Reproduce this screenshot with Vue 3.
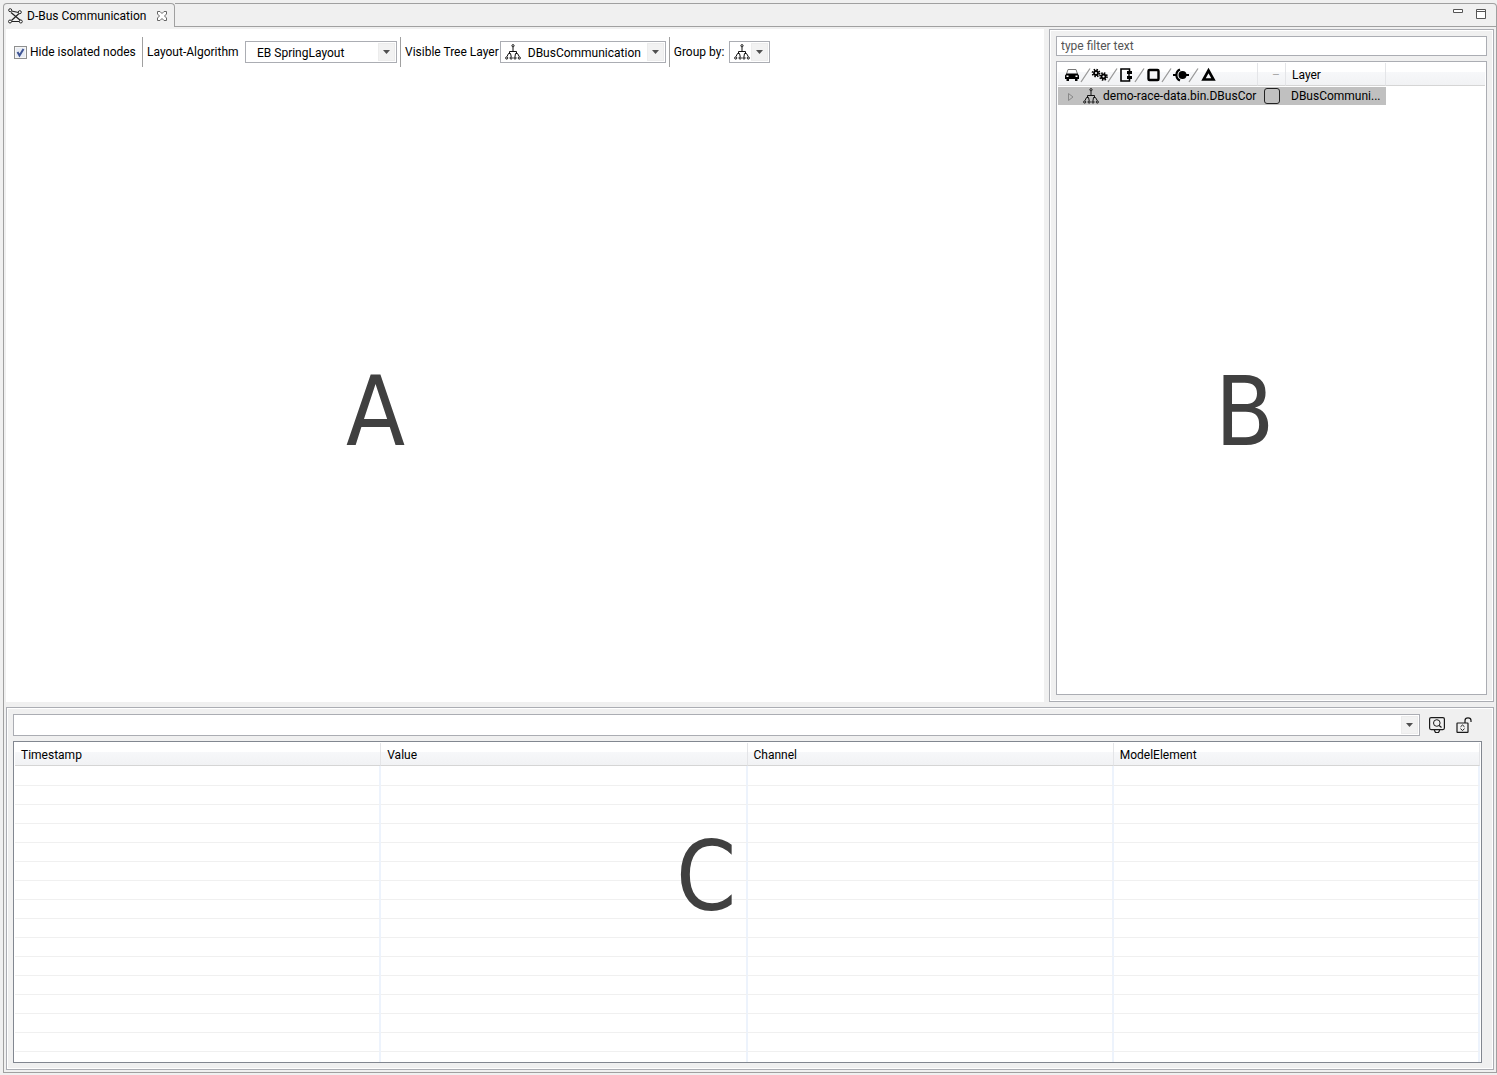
<script setup>
import { ref } from 'vue'

const hideIsolated = ref(true)
const filter = ref('')
const query = ref('')
const layoutAlgorithm = ref('EB SpringLayout')
const treeLayer = ref('DBusCommunication')
const group = ref('layer')
const columns = ['Timestamp', 'Value', 'Channel', 'ModelElement']
const rowCount = 16
</script>

<template>
  <svg class="defs" width="0" height="0" aria-hidden="true">
    <symbol id="tree-icon" viewBox="0 0 16 16">
      <g fill="none" stroke="#111">
        <circle cx="8" cy="1.700" r="1.100" />
        <path d="M8 3V7.500M4.500 10V7.500H11.500V10M4.500 9.500H3.500L2 12.500M4.500 9.500H5.500L6.200 12.500M11.500 9.500H10.500L10 12.500M11.500 9.500H12.500L14.200 12.500" />
        <circle cx="1.700" cy="14" r="1.100" />
        <circle cx="6.100" cy="14" r="1.100" />
        <circle cx="10" cy="14" r="1.100" />
        <circle cx="14.300" cy="14" r="1.100" />
      </g>
    </symbol>
    <symbol id="arrow-icon" viewBox="0 0 7 4">
      <path d="M0 0H7L3.500 4Z" fill="#505050" />
    </symbol>
  </svg>

  <div class="window">
    <header class="tabbar">
      <div class="tab">
        <svg class="tab-icon" width="16" height="16" viewBox="0 0 16 16" fill="none" stroke="#222" aria-hidden="true">
          <path d="M3.500 3L10.500 4.500M11 5.500L3.500 12.500M3 4.500L12.500 12.500M3.500 13.500H12" stroke-width="1.200" />
          <circle cx="2.200" cy="2.200" r="1.500" fill="#fff" />
          <circle cx="11.800" cy="4.200" r="1.500" fill="#fff" />
          <circle cx="2" cy="13.500" r="1.500" fill="#fff" />
          <circle cx="12.800" cy="13.500" r="1.500" fill="#fff" />
        </svg>
        <span>D-Bus Communication</span>
        <button class="plain" aria-label="Close">
          <svg width="12" height="12" viewBox="0 0 12 12" aria-hidden="true">
            <path d="M1.500 1.500H4L6 3.500L8 1.500H10.500V4L8.500 6L10.500 8V10.500H8L6 8.500L4 10.500H1.500V8L3.500 6L1.500 4Z" fill="#fff" stroke="#666" />
          </svg>
        </button>
      </div>
      <div class="tab-rest">
        <button class="plain" aria-label="Minimize">
          <svg width="10" height="10" viewBox="0 0 10 10" aria-hidden="true"><path d="M.5 .5H9.500V3.500H.5Z" fill="#fff" stroke="#555" /></svg>
        </button>
        <button class="plain" aria-label="Maximize">
          <svg width="10" height="10" viewBox="0 0 10 10" aria-hidden="true"><path d="M.5 .5H9.500V9.500H.5ZM0 2.500H10" fill="#fff" stroke="#555" /></svg>
        </button>
      </div>
    </header>

    <main class="content">
      <div class="upper">
        <section class="graph">
          <div class="toolbar">
            <label class="check">
              <span class="box">
                <input v-model="hideIsolated" type="checkbox" />
                <svg v-if="hideIsolated" width="13" height="13" viewBox="0 0 13 13" aria-hidden="true">
                  <path d="M3.500 6L5.500 9.500L9.500 3" fill="none" stroke="#3f5595" stroke-width="2" />
                </svg>
              </span>
              <span>Hide isolated nodes</span>
            </label>
            <div class="group first">
              <label class="algorithm-label" for="algorithm">Layout-Algorithm</label>
              <div class="combo algorithm">
                <select id="algorithm" v-model="layoutAlgorithm"><option>EB SpringLayout</option></select>
                <span class="arrow"><svg width="7" height="4"><use href="#arrow-icon" /></svg></span>
              </div>
            </div>
            <div class="group">
              <label for="layer">Visible Tree Layer</label>
              <div class="combo layer">
                <svg class="lead" width="16" height="16"><use href="#tree-icon" /></svg>
                <select id="layer" v-model="treeLayer"><option>DBusCommunication</option></select>
                <span class="arrow"><svg width="7" height="4"><use href="#arrow-icon" /></svg></span>
              </div>
            </div>
            <div class="group">
              <label class="group-label" for="group-by">Group by:</label>
              <div class="combo group-by">
                <svg class="lead" width="16" height="16"><use href="#tree-icon" /></svg>
                <select id="group-by" v-model="group"><option value="layer"></option></select>
                <span class="arrow"><svg width="7" height="4"><use href="#arrow-icon" /></svg></span>
              </div>
            </div>
          </div>
          <div class="mark mark-a">A</div>
        </section>

        <section class="panel side">
          <input v-model="filter" class="filter" type="text" placeholder="type filter text" aria-label="Filter" />
          <div class="tree">
            <table>
              <colgroup><col class="c-name" /><col class="c-check" /><col class="c-layer" /><col /></colgroup>
              <thead>
                <tr>
                  <th aria-label="Element">
                    <svg class="kinds" width="160" height="16" viewBox="0 0 160 16" aria-hidden="true">
                      <path d="M3.500 7L5 2.500H13L14.500 7" fill="none" stroke="#777" />
                      <path d="M3.500 6.500H14.500L16 8.500V12H14.500V14H12V12H6V14H3.500V12H2V8.500Z" fill="#000" />
                      <path d="M3.500 8.500H5.500V10H3.500ZM12.500 8.500H14.500V10H12.500Z" fill="#fff" />
                      <path d="M18 15L27 1.500M45 15L54 1.500M72 15L81 1.500M99 15L108 1.500M126 15L135 1.500" fill="none" stroke="#999" stroke-width="1.300" />
                      <g fill="none" stroke="#000">
                        <circle cx="33" cy="6" r="2" stroke-width="1.800" />
                        <circle cx="33" cy="6" r="3.500" stroke-width="1.700" stroke-dasharray="1.500 1.249" />
                        <circle cx="40.500" cy="9.500" r="2" stroke-width="1.800" />
                        <circle cx="40.500" cy="9.500" r="3.500" stroke-width="1.700" stroke-dasharray="1.500 1.249" />
                        <path d="M66.500 4V2H58V14H66.500V12" stroke-width="1.600" />
                        <path d="M66 5V11" stroke-width="1.400" />
                        <path d="M64 5.500H69M64 10.500H69" stroke-width="3" />
                        <rect x="85.500" y="3" width="10" height="10" rx="1" stroke-width="2.400" />
                        <path d="M117 2.500A6 6 0 0 0 117 13.500" stroke-width="2.200" />
                        <path d="M110 8H113M122 8H126" stroke-width="2.200" />
                        <path d="M145.500 3.500L150.500 12.500H140.500Z" stroke-width="2.600" />
                      </g>
                      <circle cx="119.500" cy="8" r="4" />
                    </svg>
                  </th>
                  <th class="dash"><span>–</span></th>
                  <th>Layer</th>
                  <th aria-hidden="true"></th>
                </tr>
              </thead>
              <tbody>
                <tr>
                  <td>
                    <div class="node">
                      <svg class="expander" width="6" height="8" viewBox="0 0 6 8" aria-hidden="true"><path d="M.5 .5L5 4L.5 7.500Z" fill="none" stroke="#888" /></svg>
                      <svg class="node-icon" width="16" height="16" aria-hidden="true"><use href="#tree-icon" /></svg>
                      <span>demo-race-data.bin.DBusCor</span>
                    </div>
                  </td>
                  <td><input class="swatch" type="checkbox" aria-label="Show element" /></td>
                  <td>DBusCommuni...</td>
                  <td class="blank"></td>
                </tr>
              </tbody>
            </table>
          </div>
          <div class="mark mark-b">B</div>
        </section>
      </div>

      <section class="panel lower">
        <div class="search">
          <div class="combo query">
            <select v-model="query" aria-label="Query"><option value=""></option></select>
            <span class="arrow"><svg width="7" height="4"><use href="#arrow-icon" /></svg></span>
          </div>
          <button class="plain" aria-label="Search">
            <svg width="16" height="16" viewBox="0 0 16 16" fill="none" stroke="#1a1a1a" aria-hidden="true">
              <rect x=".6" y=".6" width="14.800" height="12" rx="1.500" stroke-width="1.200" />
              <circle cx="7.800" cy="6" r="3.300" />
              <path d="M10.200 8.500L12.500 10.500M5.500 13V13.500L6.500 15.500H9.500L10.500 13.500V13" stroke-width="1.200" />
            </svg>
          </button>
          <button class="plain" aria-label="Unlock scrolling">
            <svg width="16" height="16" viewBox="0 0 16 16" fill="none" stroke="#1a1a1a" aria-hidden="true">
              <rect x="1" y="6" width="11" height="9.400" rx=".5" stroke-width="1.200" />
              <path d="M9 6V3.500Q9 .8 12 .8Q15 .8 15 3.500V5" stroke-width="1.200" />
              <path d="M4.500 9.800L6.500 8L8.500 9.800M4.500 11.700L6.500 13.500L8.500 11.700" />
            </svg>
          </button>
        </div>
        <div class="log">
          <table>
            <thead>
              <tr><th v-for="name in columns" :key="name">{{ name }}</th></tr>
            </thead>
            <tbody>
              <tr v-for="row in rowCount" :key="row"><td v-for="name in columns" :key="name"></td></tr>
            </tbody>
          </table>
        </div>
        <div class="mark mark-c">C</div>
      </section>
    </main>
  </div>
</template>

<style>
body {
  background: #f0f0f0;
}
</style>

<style scoped>
* {
  box-sizing: border-box;
}

.defs {
  position: absolute;
}

.window,
.window button,
.window input,
.window select {
  font: 12px/16px Roboto, "Open Sans", sans-serif;
  color: #000;
}

.window {
  display: flex;
  flex-direction: column;
  height: 100vh;
  border: solid #f0f0f0;
  border-width: 3px 0 2px 3px;
  background: #f0f0f0;
}

svg {
  display: block;
  flex: none;
}

.plain {
  display: block;
  padding: 0;
  border: 0;
  background: none;
}

.tabbar {
  display: flex;
  height: 24px;
  flex: none;
}

.tab {
  display: flex;
  align-items: center;
  width: 172px;
  padding: 0 6px 0 4px;
  border: solid #a0a0a0;
  border-width: 1px 1px 0 1px;
  border-radius: 4px 4px 0 0;
  white-space: nowrap;
}

.tab-icon {
  margin-right: 3px;
}

.tab .plain {
  margin-left: auto;
}

.tab-rest {
  display: flex;
  flex: 1;
  justify-content: flex-end;
  gap: 13px;
  padding: 5px 10px 0 0;
  border: solid #a0a0a0;
  border-width: 1px 1px 1px 0;
  border-top-right-radius: 4px;
}

.tab-rest .plain {
  height: 10px;
}

.content {
  display: grid;
  flex: 1;
  grid-template-rows: minmax(0, 673fr) minmax(0, 363fr);
  gap: 5px;
  min-height: 0;
  padding: 2px;
  border: solid #a0a0a0;
  border-width: 0 1px 1px 1px;
}

.upper {
  display: grid;
  grid-template-columns: minmax(0, 1038fr) minmax(0, 445fr);
  gap: 5px;
}

.graph {
  position: relative;
  background: #fff;
}

.toolbar {
  display: flex;
  height: 30px;
  margin: 8px 0 0 8px;
  white-space: nowrap;
}

.check {
  display: flex;
  align-items: center;
  gap: 3px;
  width: 128px;
}

.box {
  position: relative;
  width: 13px;
  height: 13px;
}

.box input {
  display: block;
  width: 13px;
  height: 13px;
  margin: 0;
  appearance: none;
  border: 1px solid #8e8f8f;
  background: #e8ecf4;
  box-shadow: inset 0 0 0 1px #f6f6f6;
}

.box svg {
  position: absolute;
  inset: 0;
  pointer-events: none;
}

.group {
  display: flex;
  align-items: center;
  gap: 1px;
  margin-left: 3px;
  padding-left: 4px;
  border-left: 1px solid #a0a0a0;
}

.group.first {
  margin-left: 0;
}

.algorithm-label {
  min-width: 97px;
}

.group-label {
  min-width: 54px;
}

.combo {
  position: relative;
  display: flex;
  align-items: center;
  height: 22px;
  border: 1px solid #abadb3;
  background: #fff;
}

.combo select {
  flex: 1;
  min-width: 0;
  height: 20px;
  padding: 2px 20px 0 7px;
  appearance: none;
  border: 0;
  border-radius: 0;
  background: transparent;
}

.combo .lead {
  margin-left: 4px;
}

.algorithm {
  width: 152px;
}

.combo.algorithm select {
  padding-left: 11px;
}

.layer {
  width: 166px;
}

.group-by {
  width: 41px;
}

.combo.group-by select {
  padding: 0;
}

.arrow {
  position: absolute;
  top: 1px;
  right: 1px;
  display: flex;
  align-items: center;
  justify-content: center;
  width: 17px;
  height: 18px;
  border: 1px solid #ececec;
  background: #f2f2f2;
  pointer-events: none;
}

.panel {
  position: relative;
  display: flex;
  flex-direction: column;
  gap: 5px;
  padding: 6px;
  border: 1px solid #abadb3;
  box-shadow: inset 0 0 0 1px #fff;
}

.window .filter {
  width: 100%;
  height: 20px;
  padding: 0 4px;
  border: 1px solid #abadb3;
  border-radius: 0;
  background: #fff;
}

.filter::placeholder {
  color: #555;
  opacity: 1;
}

.tree {
  flex: 1;
  min-height: 0;
  padding: 1px;
  border: 1px solid #abadb3;
  background: #fff;
  overflow: hidden;
}

table {
  width: 100%;
  table-layout: fixed;
  border-collapse: separate;
  border-spacing: 0;
}

th,
td {
  padding: 0;
  font-weight: 400;
  text-align: left;
  white-space: nowrap;
  overflow: hidden;
}

th {
  height: 23px;
  padding-top: 2px;
  border-right: 1px solid #e4e5e8;
  border-bottom: 1px solid #d5d5d5;
  background: linear-gradient(#fff 0 40%, #f7f8fa 40%, #f1f2f4);
}

.c-name {
  width: 200px;
}

.c-check {
  width: 28px;
}

.c-layer {
  width: 100px;
}

.tree th:nth-child(3) {
  padding-left: 6px;
}

.tree th:last-child {
  border-right: 0;
}

.kinds {
  margin-left: 5px;
}

.dash {
  color: #aaa;
}

.dash span {
  display: block;
  padding-left: 14px;
}

.tree tbody tr {
  height: 19px;
}

.tree td {
  height: 19px;
  border-top: 1px solid #fff;
  background: #c0c0c0;
}

.tree td.blank {
  background: #fff;
}

.tree td:nth-child(3) {
  padding-left: 5px;
}

.node {
  display: flex;
  align-items: center;
  height: 18px;
}

.expander {
  margin: 2px 9px 0 10px;
}

.node-icon {
  margin-right: 4px;
}

.swatch {
  display: block;
  width: 16px;
  height: 16px;
  margin: 0 0 0 6px;
  appearance: none;
  border: 1px solid #222;
  border-radius: 3px;
}

.lower {
  padding-right: 11px;
}

.search {
  display: flex;
  flex: none;
  align-items: center;
  gap: 11px;
  padding-right: 10px;
}

.query {
  flex: 1;
  margin-right: -2px;
}

.log {
  flex: 1;
  min-height: 0;
  padding: 1px;
  border: 1px solid #828790;
  background: #fff;
  overflow: hidden;
}

.log th {
  padding-left: 6px;
}

.log td {
  height: 19px;
  border-right: 2px solid #edf3fc;
  border-bottom: 1px solid #f0f0f0;
}

.log tbody tr:first-child td {
  height: 20px;
}

.mark {
  position: absolute;
  font: 96px/112px "DejaVu Sans Condensed", "DejaVu Sans", sans-serif;
  font-stretch: condensed;
  color: #404040;
  pointer-events: none;
}

.mark-a {
  top: 327px;
  left: 340px;
}

.mark-b {
  top: 326px;
  left: 165px;
}

.mark-c {
  top: 113px;
  left: 669px;
}
</style>
